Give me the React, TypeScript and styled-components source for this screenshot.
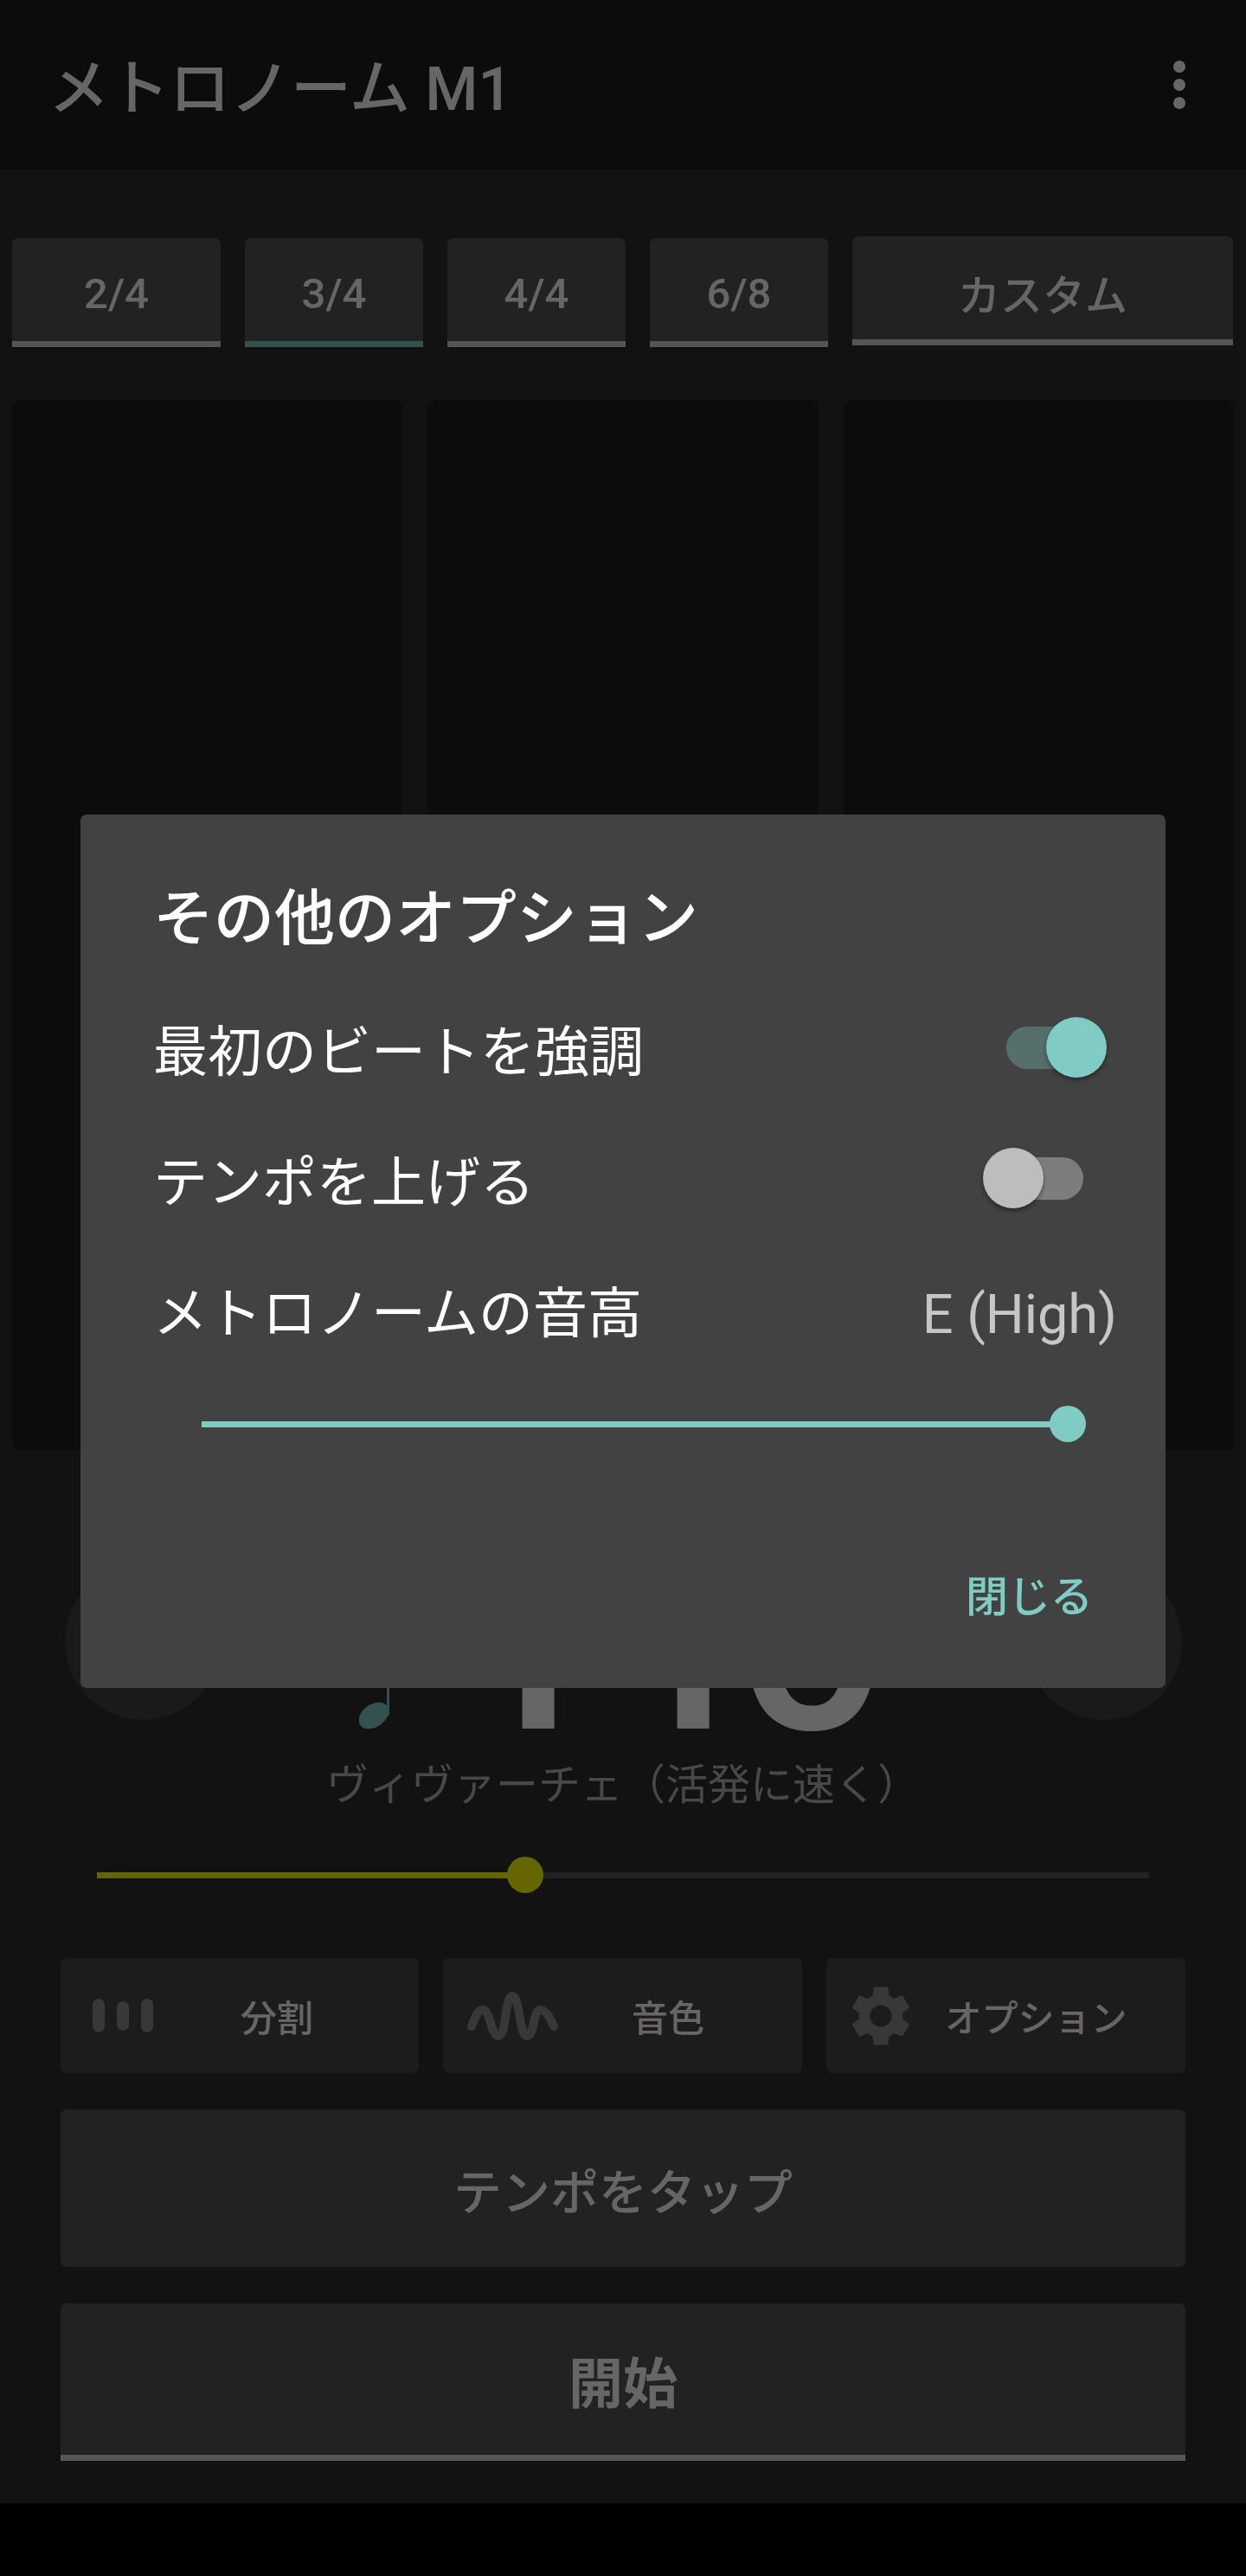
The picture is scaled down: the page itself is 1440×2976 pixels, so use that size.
import React from "react";
import styled, { createGlobalStyle } from "styled-components";
import { MdSettings } from "react-icons/md";

const GlobalStyle = createGlobalStyle`
  html, body {
    margin: 0;
    padding: 0;
    background: #000;
  }
  body {
    font-family: Roboto, "Noto Sans CJK JP", sans-serif;
    color: #fff;
  }
`;

const Screen = styled.div`
  position: relative;
  width: 1440px;
  height: 2976px;
  overflow: hidden;
  background: #000;
`;
const Page = styled.div`
  height: 2892px;
  background: #2d2d2d;
  display: flex;
  flex-direction: column;
`;
const Header = styled.header`
  height: 196px;
  flex: none;
  box-sizing: border-box;
  background: #1f1f1f;
  padding: 0 70px 0 56px;
  display: flex;
  align-items: center;
  justify-content: space-between;
`;
const Title = styled.div`
  padding-top: 10px;
  font-size: 70px;
  font-weight: 500;
  line-height: 1;
  color: #fff;
`;
const MenuDots = styled.div`
  display: flex;
  flex-direction: column;
  gap: 7px;
`;
const Dot = styled.span`
  width: 14px;
  height: 14px;
  border-radius: 50%;
  background: #fff;
`;
const TabRow = styled.div`
  display: grid;
  grid-template-columns: 241px 206px 206px 206px 440px;
  column-gap: 28px;
  padding: 0 14px;
  margin-top: 77px;
`;
const Tab = styled.div<{ $active?: boolean; $raised?: boolean }>`
  height: 126px;
  margin-top: ${(props) => (props.$raised ? "0" : "2px")};
  padding-top: 9px;
  box-sizing: border-box;
  background: #555;
  border-radius: 7px 7px 0 0;
  border-bottom: 7px solid ${(props) => (props.$active ? "#80cbc4" : "#d4d4d4")};
  display: flex;
  align-items: center;
  justify-content: center;
  font-size: 49px;
  font-weight: 500;
  color: #fff;
`;
const PanelRow = styled.div`
  display: grid;
  grid-template-columns: 451px 452px 451px;
  column-gap: 29px;
  padding: 0 14px;
  margin-top: 61px;
`;
const Panel = styled.div`
  height: 1213px;
  background: #1f1f1f;
  border-radius: 10px;
`;
const TempoRow = styled.div`
  height: 325px;
  flex: none;
  box-sizing: border-box;
  padding: 0 74px 2px 75px;
  display: flex;
  align-items: flex-end;
  justify-content: space-between;
`;
const RoundButton = styled.div`
  width: 180px;
  height: 180px;
  margin-bottom: 11px;
  border-radius: 50%;
  background: #414141;
`;
const TempoValue = styled.div`
  display: flex;
  align-items: flex-end;
  gap: 71px;
  height: 323px;
  margin-left: 2px;
`;
const NoteIcon = styled.svg`
  width: 36px;
  height: 100px;
  flex: none;
  fill: #80cbc4;
`;
const Bpm = styled.div`
  font-size: 315px;
  line-height: 230px;
  margin-bottom: -7px;
  font-weight: 500;
  color: #fff;
`;
const BpmLast = styled.span`
  margin-left: -32px;
`;
const Marking = styled.div`
  margin-top: 28px;
  text-align: center;
  font-size: 49px;
  line-height: 70px;
  color: #b3b3b3;
`;
const SliderBox = styled.div<{ $inset: string; $top: string }>`
  margin-top: ${(props) => props.$top};
  padding: ${(props) => props.$inset};
`;
const Track = styled.div<{ $rest: string }>`
  position: relative;
  height: 7px;
  background: ${(props) => props.$rest};
`;
const Fill = styled.div<{ $color: string }>`
  height: 100%;
  background: ${(props) => props.$color};
`;
const Thumb = styled.div<{ $color: string }>`
  position: absolute;
  top: -18px;
  width: 42px;
  height: 42px;
  margin-left: -21px;
  border-radius: 50%;
  background: ${(props) => props.$color};
`;
const ToolRow = styled.div`
  display: grid;
  grid-template-columns: 414px 415px 415px;
  column-gap: 28px;
  padding: 0 70px;
  margin-top: 92px;
`;
const ToolButton = styled.div`
  height: 133px;
  background: #464646;
  border-radius: 7px;
  display: flex;
  align-items: center;
`;
const ToolIcon = styled.div<{ $width: string; $left: string }>`
  width: ${(props) => props.$width};
  margin-left: ${(props) => props.$left};
  flex: none;
  display: flex;
  align-items: center;
  color: #8c8c8c;
`;
const ToolLabel = styled.div<{ $right: string }>`
  flex: 1;
  padding-right: ${(props) => props.$right};
  text-align: center;
  font-size: 42px;
  font-weight: 500;
  color: #fff;
`;
const Bars = styled.div`
  display: flex;
  align-items: center;
  gap: 14px;
`;
const Bar = styled.span<{ $short?: boolean }>`
  width: 14px;
  height: ${(props) => (props.$short ? "34px" : "39px")};
  border-radius: 7px;
  background: #8c8c8c;
`;
const WideButton = styled.div<{ $strip?: boolean; $top: string }>`
  height: 182px;
  margin: ${(props) => props.$top} 70px 0;
  box-sizing: border-box;
  background: #555;
  border-radius: 7px 7px ${(props) => (props.$strip ? "0 0" : "7px 7px")};
  border-bottom: ${(props) => (props.$strip ? "7px solid #d4d4d4" : "none")};
  display: flex;
  align-items: center;
  justify-content: center;
  color: #fff;
`;
const TapLabel = styled.span`
  font-size: 56px;
  font-weight: 500;
`;
const StartLabel = styled.span`
  font-size: 63px;
  font-weight: 700;
`;
const Scrim = styled.div`
  position: absolute;
  inset: 0;
  background: rgba(0, 0, 0, 0.6);
`;
const Dialog = styled.div`
  position: absolute;
  left: 93px;
  top: 941px;
  width: 1254px;
  height: 1009px;
  box-sizing: border-box;
  padding-top: 86px;
  background: #424242;
  border-radius: 7px;
`;
const DialogTitle = styled.div`
  padding-left: 84px;
  font-size: 70px;
  line-height: 70px;
  font-weight: 500;
  color: #fff;
`;
const OptionList = styled.div`
  margin-top: 62px;
  display: flex;
  flex-direction: column;
  gap: 51px;
`;
const OptionRow = styled.div<{ $right: string }>`
  height: 100px;
  padding: 0 ${(props) => props.$right} 0 84px;
  display: flex;
  align-items: center;
  justify-content: space-between;
  font-size: 63px;
  color: #fff;
`;
const PitchValue = styled.span`
  margin-top: 14px;
  color: rgba(255, 255, 255, 0.7);
  font-size: 63px;
`;
const Switch = styled.div<{ $on?: boolean }>`
  position: relative;
  width: 116px;
  height: 70px;
  margin-top: 2px;
  display: flex;
  align-items: center;
  justify-content: ${(props) => (props.$on ? "flex-start" : "flex-end")};
`;
const SwitchTrack = styled.div<{ $on?: boolean }>`
  width: 102px;
  height: 49px;
  border-radius: 25px;
  background: ${(props) => (props.$on ? "#566f6b" : "#7d7d7d")};
`;
const SwitchThumb = styled.div<{ $on?: boolean }>`
  position: absolute;
  top: 0;
  ${(props) => (props.$on ? "right: 0;" : "left: 0;")}
  width: 70px;
  height: 70px;
  border-radius: 50%;
  background: ${(props) => (props.$on ? "#80cbc4" : "#bdbdbd")};
  box-shadow: 0 3px 5px rgba(0, 0, 0, 0.4);
`;
const DialogActions = styled.div`
  margin-top: 162px;
  padding-right: 84px;
  display: flex;
  justify-content: flex-end;
  font-size: 49px;
  line-height: 70px;
  font-weight: 500;
  color: #80cbc4;
`;

const tabs = ["2/4", "3/4", "4/4", "6/8", "カスタム"];

const Slider = (props: {
  value: number;
  inset: string;
  top: string;
  color: string;
  rest: string;
}) => (
  <SliderBox $inset={props.inset} $top={props.top}>
    <Track $rest={props.rest}>
      <Fill $color={props.color} style={{ width: `${props.value}%` }} />
      <Thumb $color={props.color} style={{ left: `${props.value}%` }} />
    </Track>
  </SliderBox>
);

const Toggle = (props: { on?: boolean }) => (
  <Switch $on={props.on}>
    <SwitchTrack $on={props.on} />
    <SwitchThumb $on={props.on} />
  </Switch>
);

const WaveIcon = () => (
  <svg width="105" height="56" viewBox="0 0 105 56" fill="none">
    <path
      d="M5 40 C9 30 12 21 18 21 C27 21 27 51 36 51 C46 51 43 5 52 5 C61 5 60 51 69 51 C78 51 76 21 84 21 C91 21 96 30 100 40"
      stroke="currentColor"
      strokeWidth="10"
      strokeLinecap="round"
    />
  </svg>
);

export default function App() {
  return (
    <Screen>
      <GlobalStyle />
      <Page>
        <Header>
          <Title>メトロノーム M1</Title>
          <MenuDots>
            <Dot />
            <Dot />
            <Dot />
          </MenuDots>
        </Header>
        <TabRow>
          {tabs.map((tab, i) => (
            <Tab key={tab} $active={i === 1} $raised={i === 4}>
              {tab}
            </Tab>
          ))}
        </TabRow>
        <PanelRow>
          <Panel />
          <Panel />
          <Panel />
        </PanelRow>
        <TempoRow>
          <RoundButton />
          <TempoValue>
            <NoteIcon viewBox="0 0 36 100">
              <ellipse cx="17" cy="84" rx="19" ry="13" transform="rotate(-35 17 84)" />
              <rect x="32" y="0" width="3" height="84" />
            </NoteIcon>
            <Bpm>
              11<BpmLast>0</BpmLast>
            </Bpm>
          </TempoValue>
          <RoundButton />
        </TempoRow>
        <Marking>ヴィヴァーチェ（活発に速く）</Marking>
        <Slider value={40.7} inset="0 112px" top="65px" color="#ffff00" rest="#555" />
        <ToolRow>
          <ToolButton>
            <ToolIcon $width="93px" $left="37px">
              <Bars>
                <Bar />
                <Bar $short />
                <Bar />
              </Bars>
            </ToolIcon>
            <ToolLabel $right="44px">分割</ToolLabel>
          </ToolButton>
          <ToolButton>
            <ToolIcon $width="105px" $left="28px">
              <WaveIcon />
            </ToolIcon>
            <ToolLabel $right="28px">音色</ToolLabel>
          </ToolButton>
          <ToolButton>
            <ToolIcon $width="84px" $left="21px">
              <MdSettings size={84} />
            </ToolIcon>
            <ToolLabel $right="35px">オプション</ToolLabel>
          </ToolButton>
        </ToolRow>
        <WideButton $top="42px">
          <TapLabel>テンポをタップ</TapLabel>
        </WideButton>
        <WideButton $top="42px" $strip>
          <StartLabel>開始</StartLabel>
        </WideButton>
      </Page>
      <Scrim />
      <Dialog>
        <DialogTitle>その他のオプション</DialogTitle>
        <OptionList>
          <OptionRow $right="68px">
            最初のビートを強調
            <Toggle on />
          </OptionRow>
          <OptionRow $right="95px">
            テンポを上げる
            <Toggle />
          </OptionRow>
          <OptionRow $right="56px">
            メトロノームの音高
            <PitchValue>E (High)</PitchValue>
          </OptionRow>
        </OptionList>
        <Slider value={100} inset="0 113px 0 140px" top="81px" color="#80cbc4" rest="#80cbc4" />
        <DialogActions>閉じる</DialogActions>
      </Dialog>
    </Screen>
  );
}
